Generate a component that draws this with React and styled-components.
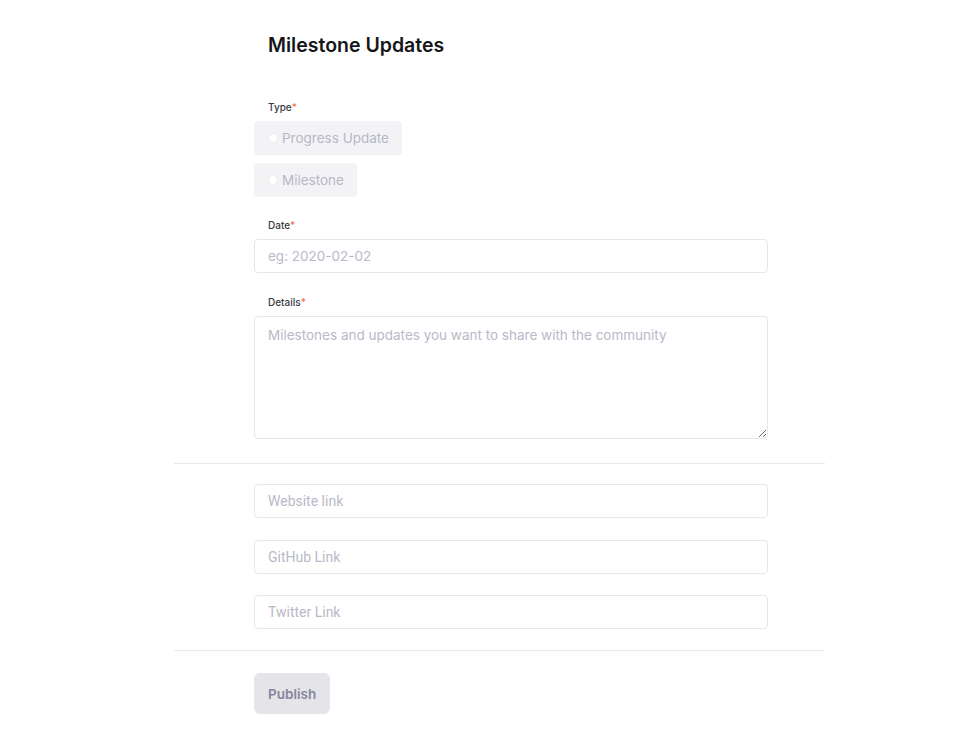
import React from 'react';
import styled, { createGlobalStyle } from 'styled-components';

const GlobalStyle = createGlobalStyle`
  body {
    margin: 0;
    background: #ffffff;
    font-family: Inter, "Liberation Sans", sans-serif;
    color: #1a1a1f;
  }
`;

const Page = styled.div`
  width: 651px;
  margin-left: 174px;
  padding-top: 32px;
  padding-bottom: 38px;
`;

const Section = styled.div`
  display: flex;
  flex-direction: column;
  padding: 0 57px 0 80px;
`;

const Title = styled.h1`
  margin: 0 0 0 14px;
  font-size: 19.5px;
  line-height: 26px;
  font-weight: 600;
  color: #16161a;
`;

const Field = styled.div`
  display: flex;
  flex-direction: column;
  margin-top: ${({ $top }) => $top}px;
`;

const Label = styled.label`
  margin-left: 14px;
  margin-bottom: 8px;
  font-size: 10px;
  line-height: 12px;
  font-weight: 500;
  color: #3a3a44;

  span {
    color: #f2784a;
  }
`;

const Choices = styled.div`
  display: flex;
  flex-direction: column;
  align-items: flex-start;
  gap: 8px;
`;

const Choice = styled.div`
  display: flex;
  align-items: center;
  gap: 4px;
  height: 34px;
  padding: 0 13px 0 14px;
  box-sizing: border-box;
  background: #f3f3f5;
  border-radius: 4px;
  font-size: 13.5px;
  color: #b7b7c5;
`;

const Dot = styled.span`
  width: 8px;
  height: 8px;
  border-radius: 50%;
  background: #ffffff;
  border: 1px solid #ececf0;
`;

const inputBase = `
  box-sizing: border-box;
  width: 100%;
  border: 1px solid #e6e6eb;
  border-radius: 4px;
  background: #ffffff;
  font-family: Inter, "Liberation Sans", sans-serif;
  font-size: 13.5px;
  color: #1a1a1f;
  outline: none;
  &::placeholder {
    color: #b9b9c7;
  }
`;

const Input = styled.input`
  ${inputBase}
  height: 34px;
  padding: 0 13px;
`;

const TextArea = styled.textarea`
  ${inputBase}
  height: 123px;
  padding: 9px 13px;
  line-height: 18px;
  resize: vertical;
`;

const Divider = styled.hr`
  margin: ${({ $top }) => $top}px 0 ${({ $bottom }) => $bottom}px;
  border: none;
  border-top: 1px solid #e9e9ed;
`;

const Links = styled.div`
  display: flex;
  flex-direction: column;
  gap: 21.5px;
`;

const LinkInput = styled(Input)`
  font-family: Roboto, "Liberation Sans", sans-serif;
  font-size: 14px;
`;

const PublishButton = styled.button`
  align-self: flex-start;
  height: 41px;
  padding: 0 14px;
  border: none;
  border-radius: 6px;
  background: #e4e4e9;
  color: #86869a;
  font-family: Inter, "Liberation Sans", sans-serif;
  font-size: 13.5px;
  font-weight: 600;
`;

export default function App() {
  return (
    <>
      <GlobalStyle />
      <Page>
        <Section>
          <Title>Milestone Updates</Title>

          <Field $top={43}>
            <Label>Type<span>*</span></Label>
            <Choices>
              <Choice><Dot />Progress Update</Choice>
              <Choice><Dot />Milestone</Choice>
            </Choices>
          </Field>

          <Field $top={22}>
            <Label>Date<span>*</span></Label>
            <Input placeholder="eg: 2020-02-02" />
          </Field>

          <Field $top={23}>
            <Label>Details<span>*</span></Label>
            <TextArea placeholder="Milestones and updates you want to share with the community" />
          </Field>
        </Section>

        <Divider $top={24} $bottom={20} />

        <Section>
          <Links>
            <LinkInput placeholder="Website link" />
            <LinkInput placeholder="GitHub Link" />
            <LinkInput placeholder="Twitter Link" />
          </Links>
        </Section>

        <Divider $top={21} $bottom={22} />

        <Section>
          <PublishButton>Publish</PublishButton>
        </Section>
      </Page>
    </>
  );
}
